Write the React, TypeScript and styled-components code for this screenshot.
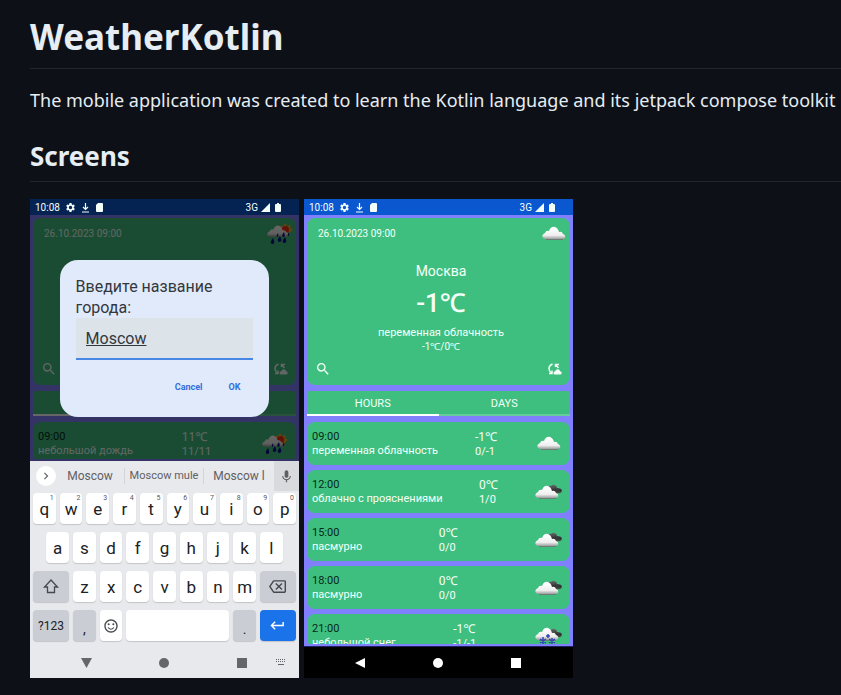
import React from "react";
import styled, { createGlobalStyle } from "styled-components";
import {
  MdChevronRight,
  MdKeyboardReturn,
  MdMic,
  MdOutlineBackspace,
  MdOutlineSentimentSatisfied,
  MdSearch,
  MdSettings,
} from "react-icons/md";

const GlobalStyle = createGlobalStyle`
  *, *::before, *::after { box-sizing: border-box; }
  html { background: #0d1117; }
  body { margin: 0; background: #0d1117; overflow-x: hidden; }
  button, input { font: inherit; color: inherit; border: 0; padding: 0; background: none; }
  svg { display: block; flex: none; }
`;

const Article = styled.article`
  padding: 16px 0 17px 30px;
  color: #e6edf3;
  font-family: "Noto Sans", sans-serif;
  font-size: 18px;
  line-height: 26px;
`;

const Title = styled.h1`
  margin: 0 0 18px;
  padding-bottom: 10px;
  border-bottom: 1px solid #21262d;
  font-size: 35px;
  line-height: 42px;
  font-weight: 700;
`;

const Intro = styled.p`
  margin: 0 0 26px;
`;

const Subtitle = styled.h2`
  margin: 0 0 17px;
  padding-bottom: 8px;
  border-bottom: 1px solid #21262d;
  font-size: 26px;
  line-height: 34px;
  font-weight: 700;
`;

const Gallery = styled.div`
  display: flex;
  flex-wrap: wrap;
  gap: 5px;
`;

const Phone = styled.section`
  display: flex;
  flex-direction: column;
  flex: 0 1 269px;
  aspect-ratio: 269 / 479;
  overflow: hidden;
  background: #8080ff;
  color: #f4fff9;
  font-family: Roboto, "Noto Sans", sans-serif;
  font-size: 11px;
  line-height: 14px;
`;

const StatusBar = styled.header<{ $dim?: boolean }>`
  display: flex;
  align-items: center;
  gap: 5px;
  flex: none;
  height: 16px;
  padding: 1px 18px 0 5px;
  background: ${(p) => (p.$dim ? "#042353" : "#0b57d0")};
  font-size: 10px;
`;

const StatusEnd = styled.div`
  display: flex;
  align-items: center;
  gap: 3px;
  margin-left: auto;
`;

const Screen = styled.div`
  position: relative;
  display: flex;
  flex-direction: column;
  flex: 1;
  min-height: 0;
  padding: 3px 3px 2px;
  overflow: hidden;
`;

const Summary = styled.div`
  display: flex;
  flex-direction: column;
  justify-content: space-between;
  flex: none;
  height: 167px;
  margin-bottom: 6px;
  padding: 4px 3px 8px 8px;
  border-radius: 8px;
  background: #3fbf7f;
`;

const SummaryHead = styled.div`
  display: flex;
  align-items: center;
  justify-content: space-between;
  padding: 1px 0 0 3px;
`;

const SummaryActions = styled.div`
  display: flex;
  align-items: center;
  justify-content: space-between;
  padding-right: 5px;
`;

const SmallText = styled.span`
  font-size: 10px;
`;

const Reading = styled.div`
  display: flex;
  flex-direction: column;
  align-items: center;
  padding-top: 9px;
`;

const City = styled.div`
  font-size: 14px;
  line-height: 20px;
`;

const BigTemp = styled.div`
  margin: 6px 0 7px;
  font-size: 26px;
  line-height: 32px;
  font-weight: 500;
`;

const IconButton = styled.button`
  display: flex;
`;

const Tabs = styled.div`
  display: grid;
  grid-template-columns: 1fr 1fr;
  flex: none;
  margin-bottom: 6px;
  border-radius: 3px 3px 0 0;
  overflow: hidden;
  background: #3fbf7f;
`;

const Tab = styled.button<{ $active?: boolean }>`
  height: 25px;
  padding-top: 3px;
  border-bottom: 2px solid ${(p) => (p.$active ? "#fff" : "#66cc99")};
`;

const HourList = styled.ul`
  display: flex;
  flex-direction: column;
  gap: 5px;
  flex: 1;
  min-height: 0;
  margin: 0;
  padding: 0;
  overflow: hidden;
  border-radius: 0 0 3px 3px;
  list-style: none;
`;

const HourRow = styled.li`
  display: flex;
  align-items: center;
  justify-content: space-between;
  flex: none;
  height: 43px;
  padding: 0 8px 0 5px;
  border-radius: 8px;
  background: #3fbf7f;
`;

const HourTime = styled.div`
  color: #062a18;
`;

const Temp = styled.div`
  font-size: 12px;
  line-height: 16px;
`;

const Scrim = styled.div`
  position: absolute;
  inset: 0;
  display: flex;
  align-items: center;
  justify-content: center;
  background: rgba(0, 0, 0, 0.6);
`;

const Dialog = styled.form`
  display: flex;
  flex-direction: column;
  width: 78%;
  padding: 16px;
  border-radius: 18px;
  background: #e1eafa;
  color: #33373e;
`;

const DialogLabel = styled.label`
  font-size: 16px;
  line-height: 21px;
`;

const CityInput = styled.input`
  width: 100%;
  height: 42px;
  padding: 2px 10px 0;
  border-bottom: 2px solid #4a86e6;
  background: #dce3e9;
  font-size: 16px;
  text-decoration: underline;
`;

const DialogActions = styled.div`
  display: flex;
  justify-content: flex-end;
  gap: 26px;
  padding: 20px 13px 7px 0;
  color: #2f6fe0;
  font-size: 9px;
  font-weight: 700;
`;

const Keyboard = styled.div`
  flex: none;
  background: #e8e9ed;
  color: #202124;
`;

const Suggestions = styled.div`
  display: grid;
  grid-template-columns: 26px 69px 79px 1fr 25px;
  height: 30px;
  color: #5f6063;
`;

const Suggestion = styled.button<{ $small?: boolean; $divided?: boolean }>`
  height: 16px;
  align-self: center;
  border-right: ${(p) => (p.$divided ? "1px solid #d3d4d8" : "0")};
  font-size: ${(p) => (p.$small ? 11 : 12)}px;
  white-space: nowrap;
`;

const ExpandButton = styled.button`
  display: flex;
  align-items: center;
  justify-content: center;
  place-self: center end;
  width: 20px;
  height: 20px;
  border-radius: 50%;
  background: #fff;
`;

const MicButton = styled.button`
  display: flex;
  align-items: center;
  justify-content: center;
  background: #d9dade;
`;

const Keys = styled.div`
  display: grid;
  grid-template-columns: repeat(20, 1fr);
  grid-auto-rows: 31px;
  gap: 8px 4px;
  padding: 2px 3px 5px;
`;

const Key = styled.button<{ $span?: number; $start?: number; $tone?: "grey" | "blue" }>`
  position: relative;
  display: flex;
  align-items: center;
  justify-content: center;
  grid-column: ${(p) => p.$start ?? "auto"} / span ${(p) => p.$span ?? 2};
  min-width: 0;
  border-radius: 4px;
  background: ${(p) => (p.$tone === "blue" ? "#1a73e8" : p.$tone === "grey" ? "#cbcdd5" : "#fff")};
  color: ${(p) => (p.$tone === "blue" ? "#fff" : "inherit")};
  box-shadow: 0 1px 1px rgba(0, 0, 0, 0.16);
  font-size: 17px;
`;

const KeyHint = styled.sup`
  position: absolute;
  top: 1px;
  right: 2px;
  color: #55575b;
  font-size: 7px;
  line-height: 8px;
`;

const KeyWord = styled.span`
  font-size: 12px;
`;

const KeyMark = styled.span`
  padding-top: 6px;
  font-size: 14px;
`;

const NavBar = styled.nav<{ $dark?: boolean }>`
  position: relative;
  display: flex;
  align-items: center;
  justify-content: space-between;
  flex: none;
  height: 32px;
  padding: 0 51px 0 50px;
  border-top: 1px solid ${(p) => (p.$dark ? "#1f1f66" : "transparent")};
  background: ${(p) => (p.$dark ? "#000" : "#e8e9ed")};
  color: ${(p) => (p.$dark ? "#fff" : "#66666a")};
`;

const KeyboardToggle = styled.button`
  position: absolute;
  top: 11px;
  right: 12px;
`;

const Cloud = "M1 14 Q-1 11 3 9 Q4 6 7 7 Q9 2 13 3 Q16 4 17 8 Q20 7 21 10 Q24 11 23 14 Q22 15 20 15 H4 Q2 15 1 14Z";
const Drop = "q-4 5 -1 6 q4 0 1 -6";

type Sky = "cloud" | "overcast" | "snow" | "rain";

const cloudShift: Record<Sky, string> = {
  cloud: "translate(3 1)",
  overcast: "translate(1 2)",
  snow: "translate(1 0)",
  rain: "translate(2 0) scale(0.92)",
};

function WeatherIcon({ sky }: { sky: Sky }) {
  return (
    <svg width="28" height="22" viewBox="0 0 28 22" aria-label={sky}>
      <defs>
        <linearGradient id={`fill-${sky}`} x1="0" y1="0" x2="0" y2="1">
          <stop offset="0.1" stopColor="#fff" />
          <stop offset="0.7" stopColor="#efefef" />
          <stop offset="1" stopColor="#9a9e9c" />
        </linearGradient>
        <linearGradient id={`dark-${sky}`} x1="0" y1="0" x2="0" y2="1">
          <stop offset="0" stopColor="#6a6e6c" />
          <stop offset="0.6" stopColor="#2f3332" />
          <stop offset="1" stopColor="#474b49" />
        </linearGradient>
      </defs>
      {(sky === "overcast" || sky === "snow") && (
        <path
          d="M13 8 Q14 4 17 5 Q18 3 21 4 Q23 5 23 7 Q28 7 28 10 Q27 13 23 12 H17 Q13 12 13 8Z"
          fill={`url(#dark-${sky})`}
        />
      )}
      {sky === "rain" && (
        <g>
          <path d="M20 0 L22 3 L26 2 L25 5 L28 7 L25 9 L25 12 L21 11 L16 11 L15 5 L14 3 L18 3Z" fill="#f5a623" />
          <circle cx="20.500" cy="6.500" r="3.500" fill="#f22b16" />
        </g>
      )}
      <g transform={cloudShift[sky]}>
        <path d={Cloud} fill={`url(#fill-${sky})`} />
        {sky !== "rain" && <path d="M4 15.500 H21" stroke="#6f7c76" strokeWidth="1" />}
      </g>
      {sky === "rain" && (
        <path
          d={`M15 13 ${Drop} M19 9 q-3 4 -1 5 q3 0 1 -5 M8 15 ${Drop} M20 14 ${Drop} M13 10 q-2 3 -1 4 q2 0 1 -4 M24 9 q-2 3 -1 4 q2 0 1 -4`}
          fill="#0b118f"
        />
      )}
      {sky === "snow" && (
        <path
          d="M9 12 v7 M6 14 l6 4 M12 14 l-6 4 M18 13 v6 M15 14 l6 4 M21 14 l-6 4 M14 9 v4 M12 11 h4"
          stroke="#3442b8"
          strokeWidth="1.500"
        />
      )}
    </svg>
  );
}

function SyncIcon() {
  return (
    <svg width="14" height="12" viewBox="0 0 14 12" fill="none" stroke="currentColor" strokeWidth="1.500">
      <path d="M4.500 1 Q1 2.500 1 5.500 Q1 8.500 3.500 10" />
      <path d="M1 10.500 H4 V7.500" />
      <path d="M7.500 4 V1.500 H11 M7.500 1.500 L10.500 5" />
      <path
        d="M7 11.500 Q5.500 11.500 5.500 10 Q5.500 8.500 7.200 8.300 Q8 6 10 6.200 Q12 6.500 12 8.300 Q13.700 8.500 13.700 10 Q13.500 11.500 12 11.500Z"
        fill="currentColor"
        stroke="none"
      />
    </svg>
  );
}

function Status({ dim }: { dim?: boolean }) {
  return (
    <StatusBar $dim={dim}>
      <span>10:08</span>
      <MdSettings size={11} />
      <svg width="9" height="10" viewBox="0 0 9 10" fill="none" stroke="currentColor" strokeWidth="1.200">
        <path d="M4.500 0 V6 M2 4 L4.500 6.500 L7 4 M1 9 H8" />
      </svg>
      <svg width="8" height="9" viewBox="0 0 8 9" fill="currentColor">
        <path d="M3 0 H7 Q8 0 8 1 V8 Q8 9 7 9 H2 Q1 9 1 8 V2Z" />
      </svg>
      <StatusEnd>
        <span>3G</span>
        <svg width="9" height="9" viewBox="0 0 9 9" fill="currentColor">
          <path d="M9 0 V9 H0Z" />
        </svg>
        <svg width="8" height="9" viewBox="0 0 8 9" fill="currentColor">
          <path d="M4 0 H6 V1 H7 Q8 1 8 2 V8 Q8 9 7 9 H3 Q2 9 2 8 V2 Q2 1 3 1 H4Z" />
        </svg>
      </StatusEnd>
    </StatusBar>
  );
}

interface Hour {
  time: string;
  text: string;
  temp: string;
  range: string;
  sky: Sky;
}

interface WeatherProps {
  city: string;
  temp: string;
  text: string;
  range: string;
  sky: Sky;
  hours: Hour[];
  tabs: string[];
}

function Weather({ city, temp, text, range, sky, hours, tabs }: WeatherProps) {
  return (
    <>
      <Summary>
        <SummaryHead>
          <SmallText>26.10.2023 09:00</SmallText>
          <WeatherIcon sky={sky} />
        </SummaryHead>
        <Reading>
          <City>{city}</City>
          <BigTemp>{temp}</BigTemp>
          <div>{text}</div>
          <SmallText>{range}</SmallText>
        </Reading>
        <SummaryActions>
          <IconButton aria-label="Search">
            <MdSearch size={16} />
          </IconButton>
          <IconButton aria-label="Sync">
            <SyncIcon />
          </IconButton>
        </SummaryActions>
      </Summary>
      <Tabs role="tablist">
        {tabs.map((tab, i) => (
          <Tab key={i} role="tab" aria-selected={i === 0} $active={i === 0}>
            {tab}
          </Tab>
        ))}
      </Tabs>
      <HourList>
        {hours.map((h) => (
          <HourRow key={h.time}>
            <div>
              <HourTime>{h.time}</HourTime>
              <div>{h.text}</div>
            </div>
            <div>
              <Temp>{h.temp}</Temp>
              <div>{h.range}</div>
            </div>
            <WeatherIcon sky={h.sky} />
          </HourRow>
        ))}
      </HourList>
    </>
  );
}

const moscowHours: Hour[] = [
  { time: "09:00", text: "переменная облачность", temp: "-1℃", range: "0/-1", sky: "cloud" },
  { time: "12:00", text: "облачно с прояснениями", temp: "0℃", range: "1/0", sky: "overcast" },
  { time: "15:00", text: "пасмурно", temp: "0℃", range: "0/0", sky: "overcast" },
  { time: "18:00", text: "пасмурно", temp: "0℃", range: "0/0", sky: "overcast" },
  { time: "21:00", text: "небольшой снег", temp: "-1℃", range: "-1/-1", sky: "snow" },
];

const rainHours: Hour[] = [
  { time: "09:00", text: "небольшой дождь", temp: "11℃", range: "11/11", sky: "rain" },
];

function SoftKeyboard() {
  return (
    <Keyboard>
      <Suggestions>
        <ExpandButton aria-label="More">
          <MdChevronRight size={14} />
        </ExpandButton>
        <Suggestion $divided>Moscow</Suggestion>
        <Suggestion $divided $small>
          Moscow mule
        </Suggestion>
        <Suggestion>Moscow l</Suggestion>
        <MicButton aria-label="Voice input">
          <MdMic size={15} />
        </MicButton>
      </Suggestions>
      <Keys>
        {"qwertyuiop".split("").map((k, i) => (
          <Key key={k}>
            {k}
            <KeyHint>{(i + 1) % 10}</KeyHint>
          </Key>
        ))}
        {"asdfghjkl".split("").map((k, i) => (
          <Key key={k} $start={2 + i * 2}>
            {k}
          </Key>
        ))}
        <Key $span={3} $tone="grey" aria-label="Shift">
          <svg width="16" height="15" viewBox="0 0 16 15" fill="none" stroke="#46484c" strokeWidth="1.300">
            <path d="M8 1 L14.500 8 H11.500 V13.500 H4.500 V8 H1.500Z" />
          </svg>
        </Key>
        {"zxcvbnm".split("").map((k) => (
          <Key key={k}>{k}</Key>
        ))}
        <Key $span={3} $tone="grey" aria-label="Backspace">
          <MdOutlineBackspace size={17} color="#46484c" />
        </Key>
        <Key $span={3} $tone="grey">
          <KeyWord>?123</KeyWord>
        </Key>
        <Key $tone="grey">
          <KeyMark>,</KeyMark>
        </Key>
        <Key aria-label="Emoji">
          <MdOutlineSentimentSatisfied size={16} color="#46484c" />
        </Key>
        <Key $span={8} aria-label="Space" />
        <Key $tone="grey">
          <KeyMark>.</KeyMark>
        </Key>
        <Key $span={3} $tone="blue" aria-label="Enter">
          <MdKeyboardReturn size={17} />
        </Key>
      </Keys>
    </Keyboard>
  );
}

function Navigation({ dark }: { dark?: boolean }) {
  return (
    <NavBar $dark={dark}>
      <IconButton aria-label="Back">
        <svg width="12" height="12" viewBox="0 0 12 12" fill="currentColor">
          <path d={dark ? "M11 1 V11 L1 6Z" : "M1 1 H12 L6.500 11Z"} />
        </svg>
      </IconButton>
      <IconButton aria-label="Home">
        <svg width="12" height="12" viewBox="0 0 12 12" fill="currentColor">
          <circle cx="6" cy="6" r="5" />
        </svg>
      </IconButton>
      <IconButton aria-label="Recent">
        <svg width="12" height="12" viewBox="0 0 12 12" fill="currentColor">
          <rect x="1" y="1" width="10" height="10" />
        </svg>
      </IconButton>
      {!dark && (
        <KeyboardToggle aria-label="Switch keyboard">
          <svg width="12" height="9" viewBox="0 0 12 9" stroke="currentColor" fill="none">
            <path d="M1 1.500 H11 M1 3.500 H11" strokeDasharray="1 1" />
            <path d="M3 6.500 H9" />
          </svg>
        </KeyboardToggle>
      )}
    </NavBar>
  );
}

export default function App() {
  return (
    <>
      <GlobalStyle />
      <Article>
        <Title>WeatherKotlin</Title>
        <Intro>The mobile application was created to learn the Kotlin language and its jetpack compose toolkit</Intro>
        <Subtitle>Screens</Subtitle>
        <Gallery>
          <Phone>
            <Status dim />
            <Screen>
              <Weather city="" temp="" text="" range="" sky="rain" hours={rainHours} tabs={["", ""]} />
              <Scrim>
                <Dialog onSubmit={(e) => e.preventDefault()}>
                  <DialogLabel htmlFor="city">Введите название города:</DialogLabel>
                  <CityInput id="city" defaultValue="Moscow" />
                  <DialogActions>
                    <button type="button">Cancel</button>
                    <button type="submit">OK</button>
                  </DialogActions>
                </Dialog>
              </Scrim>
            </Screen>
            <SoftKeyboard />
            <Navigation />
          </Phone>
          <Phone>
            <Status />
            <Screen>
              <Weather
                city="Москва"
                temp="-1℃"
                text="переменная облачность"
                range="-1℃/0℃"
                sky="cloud"
                hours={moscowHours}
                tabs={["HOURS", "DAYS"]}
              />
            </Screen>
            <Navigation dark />
          </Phone>
        </Gallery>
      </Article>
    </>
  );
}
